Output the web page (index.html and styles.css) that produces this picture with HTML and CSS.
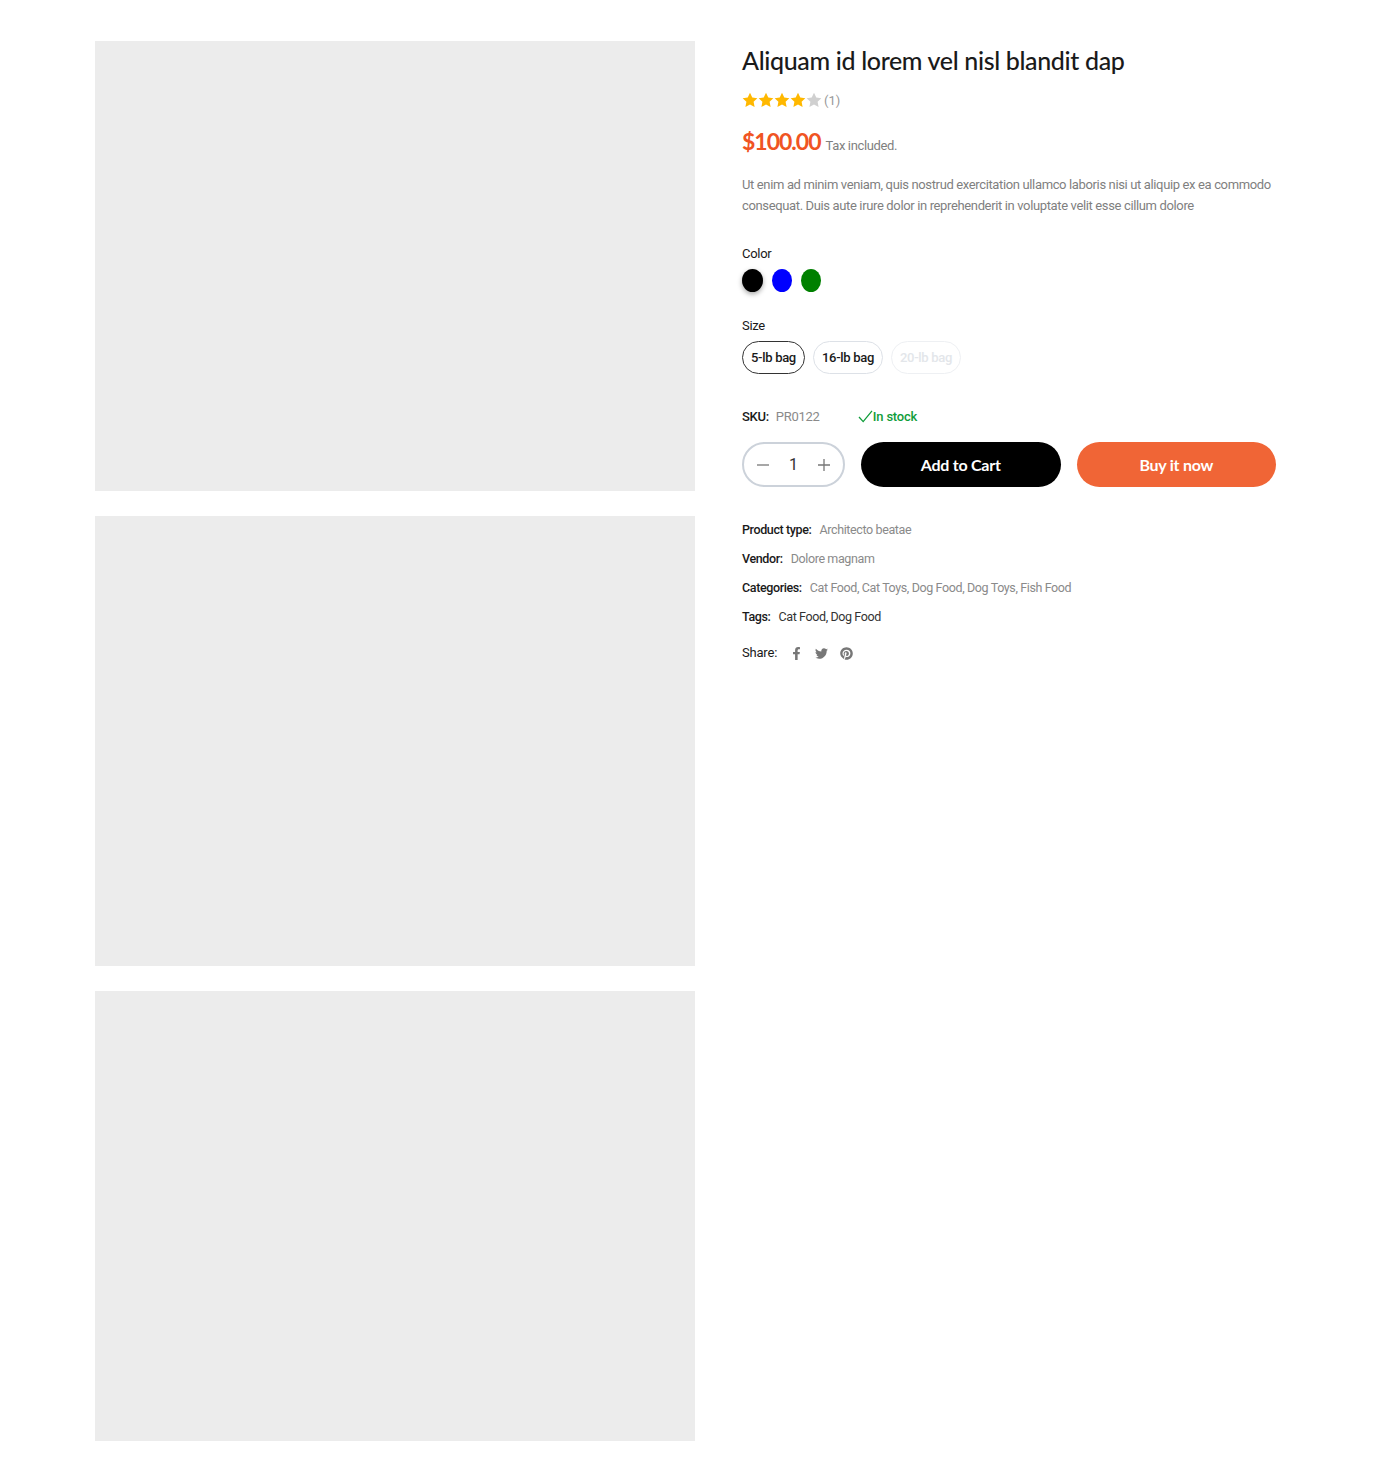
FILE: index.html
```html
<!DOCTYPE html>
<html lang="en">
<head>
    <meta charset="UTF-8">
    <meta name="viewport" content="width=device-width, initial-scale=1.0">
    <title>Product</title>
    <link rel="stylesheet" href="styles.css">
</head>
<body>
    <div class="product">
        <div class="gallery">
            <div class="photo"></div>
            <div class="photo"></div>
            <div class="photo"></div>
        </div>
        <div class="info">
            <h1 class="title">Aliquam id lorem vel nisl blandit dap</h1>
            <div class="rating">
                <svg class="star" viewBox="0 0 24 24"><path d="M12 1l3.4 7.2 7.6 1-5.6 5.4 1.5 7.9L12 18.6l-6.9 3.9 1.5-7.9L1 9.200l7.600-1z"/></svg>
                <svg class="star" viewBox="0 0 24 24"><path d="M12 1l3.4 7.2 7.6 1-5.6 5.4 1.5 7.9L12 18.6l-6.9 3.9 1.5-7.9L1 9.200l7.600-1z"/></svg>
                <svg class="star" viewBox="0 0 24 24"><path d="M12 1l3.4 7.2 7.6 1-5.6 5.4 1.5 7.9L12 18.6l-6.9 3.9 1.5-7.9L1 9.200l7.600-1z"/></svg>
                <svg class="star" viewBox="0 0 24 24"><path d="M12 1l3.4 7.2 7.6 1-5.6 5.4 1.5 7.9L12 18.6l-6.9 3.9 1.5-7.9L1 9.200l7.600-1z"/></svg>
                <svg class="star star-off" viewBox="0 0 24 24"><path d="M12 1l3.4 7.2 7.6 1-5.6 5.4 1.5 7.9L12 18.6l-6.9 3.9 1.5-7.9L1 9.200l7.600-1z"/></svg>
                <span class="rating-count">(1)</span>
            </div>
            <div class="price-row">
                <span class="price">$100.00</span>
                <span class="tax">Tax included.</span>
            </div>
            <p class="desc">Ut enim ad minim veniam, quis nostrud exercitation ullamco laboris nisi ut aliquip ex ea commodo consequat. Duis aute irure dolor in reprehenderit in voluptate velit esse cillum dolore</p>

            <div class="option-label color-label">Color</div>
            <div class="swatches">
                <span class="swatch swatch-black"></span>
                <span class="swatch swatch-blue"></span>
                <span class="swatch swatch-green"></span>
            </div>

            <div class="option-label size-label">Size</div>
            <div class="sizes">
                <span class="size size-active">5-lb bag</span>
                <span class="size">16-lb bag</span>
                <span class="size size-disabled">20-lb bag</span>
            </div>

            <div class="sku-row">
                <span class="key">SKU:</span>
                <span class="sku">PR0122</span>
                <span class="stock">
                    <svg class="check" viewBox="0 0 16 14"><path d="M1 7.500l4.500 5L15 1"/></svg>In stock
                </span>
            </div>

            <div class="buy-row">
                <div class="qty">
                    <svg class="qty-icon" viewBox="0 0 12 12"><path d="M0 6h12"/></svg>
                    <span class="qty-num">1</span>
                    <svg class="qty-icon" viewBox="0 0 12 12"><path d="M0 6h12M6 0v12"/></svg>
                </div>
                <button class="btn btn-cart">Add to Cart</button>
                <button class="btn btn-buy">Buy it now</button>
            </div>

            <ul class="meta">
                <li><span class="key">Product type:</span><span class="val">Architecto beatae</span></li>
                <li><span class="key">Vendor:</span><span class="val">Dolore magnam</span></li>
                <li><span class="key">Categories:</span><span class="val">Cat Food, Cat Toys, Dog Food, Dog Toys, Fish Food</span></li>
                <li><span class="key">Tags:</span><span class="val val-dark">Cat Food, Dog Food</span></li>
            </ul>

            <div class="share">
                <span class="share-label">Share:</span>
                <svg class="share-icon" viewBox="0 0 320 512"><path d="M279 288l14-93h-89v-60c0-25 12-50 52-50h41V7s-37-7-72-7c-73 0-121 45-121 125v70H23v93h81v224h100V288z"/></svg>
                <svg class="share-icon" viewBox="0 0 512 512"><path d="M459 152c.3 4.500.3 9 .3 13.600 0 139-106 299-299 299-59 0-115-17-161-47 8 1 16 1 25 1 49 0 94-17 130-45-46-1-85-31-98-73 6 1 13 2 20 2 9 0 19-1 28-4-48-10-84-52-84-103v-1c14 8 30 13 47 13-28-19-47-51-47-87 0-20 5-37 14-53 52 63 129 105 216 110-2-8-3-16-3-24 0-58 47-105 105-105 30 0 57 13 77 33 24-5 46-14 67-26-8 25-25 46-46 59 21-2 41-8 60-16-14 21-32 39-52 54z"/></svg>
                <svg class="share-icon" viewBox="0 0 496 512"><path d="M496 256c0 137-111 248-248 248-26 0-50-4-73-11 10-16 25-44 31-65 3-11 15-58 15-58 8 15 31 28 55 28 73 0 125-67 125-150 0-80-65-139-149-139-104 0-160 70-160 146 0 35 19 79 49 93 5 2 7 1 8-3 1-3 5-20 6-27 1-2 0-4-2-6-10-12-18-34-18-55 0-53 40-104 108-104 59 0 100 40 100 97 0 65-32 109-75 109-24 0-41-20-36-43 7-29 20-59 20-80 0-18-10-33-30-33-24 0-43 25-43 58 0 21 7 35 7 35s-24 99-28 117c-5 20-3 48-1 66C52 413 0 341 0 256 0 119 111 8 248 8s248 111 248 248z"/></svg>
            </div>
        </div>
    </div>
</body>
</html>
```

FILE: styles.css
```css
* {
    box-sizing: border-box;
}
body {
    margin: 0;
    font-family: Roboto, "Noto Sans", sans-serif;
    font-size: 14px;
    color: #111;
    background-color: #fff;
}
.product {
    display: flex;
    gap: 47px;
    padding: 41px 104px 19px 95px;
}
.gallery {
    width: 600px;
    flex-shrink: 0;
    display: flex;
    flex-direction: column;
    gap: 25px;
}
.photo {
    height: 450px;
    background-color: #ececec;
}
.info {
    flex: 1;
    min-width: 0;
}
.title {
    margin: 3px 0 0;
    font-family: Lato, sans-serif;
    font-size: 25px;
    line-height: 32px;
    font-weight: 500;
    letter-spacing: -0.35px;
    color: #1a1a1a;
}
.rating {
    display: flex;
    align-items: center;
    margin-top: 15px;
    height: 18px;
}
.star {
    width: 16px;
    height: 16px;
    fill: #ffb800;
}
.star-off {
    fill: #d0d0d0;
}
.rating-count {
    margin-left: 2px;
    color: #999;
    font-size: 13px;
}
.price-row {
    display: flex;
    align-items: baseline;
    gap: 5px;
    margin-top: 16px;
}
.price {
    font-family: Lato, sans-serif;
    font-size: 23px;
    line-height: 32px;
    font-weight: 700;
    letter-spacing: -1px;
    color: #f05423;
}
.tax {
    font-size: 13px;
    letter-spacing: -0.36px;
    color: #7f7f7f;
}
.desc {
    margin: 17px 0 0;
    font-size: 13px;
    line-height: 21px;
    letter-spacing: -0.36px;
    color: #7f7f7f;
}
.option-label {
    font-size: 13px;
    line-height: 18px;
    letter-spacing: -0.3px;
    color: #1a1a1a;
}
.color-label {
    margin-top: 29px;
}
.swatches {
    display: flex;
    gap: 9px;
    margin-top: 6px;
}
.swatch {
    width: 21px;
    height: 23px;
    border-radius: 50%;
}
.swatch-black {
    background-color: #000;
    box-shadow: 0 2px 5px rgba(0, 0, 0, 0.35);
}
.swatch-blue {
    width: 20px;
    background-color: #0000ff;
}
.swatch-green {
    width: 20px;
    background-color: #008000;
}
.size-label {
    margin-top: 25px;
}
.sizes {
    display: flex;
    gap: 8px;
    margin-top: 6px;
}
.size {
    height: 33px;
    padding: 0 8px;
    display: flex;
    align-items: center;
    border: 1.5px solid #dde1e7;
    border-radius: 17px;
    font-size: 13px;
    font-weight: 500;
    letter-spacing: -0.3px;
    color: #1a1a1a;
}
.size-active {
    border-color: #333;
}
.size-disabled {
    border-color: #eef0f3;
    color: #e3e6ea;
}
.sku-row {
    display: flex;
    align-items: center;
    margin-top: 32px;
    height: 20px;
    font-size: 13px;
    letter-spacing: -0.3px;
}
.key {
    font-weight: 500;
    color: #1a1a1a;
}
.sku {
    margin-left: 7px;
    color: #8a8a8a;
    width: 82px;
}
.stock {
    display: flex;
    align-items: center;
    font-size: 13px;
    letter-spacing: -0.2px;
    color: #0f9d3a;
    font-weight: 500;
}
.check {
    width: 15px;
    height: 13px;
    fill: none;
    stroke: #0f9d3a;
    stroke-width: 1.4;
}
.buy-row {
    display: flex;
    gap: 16px;
    margin-top: 16px;
}
.qty {
    width: 103px;
    height: 45px;
    flex-shrink: 0;
    display: flex;
    align-items: center;
    justify-content: space-between;
    padding: 0 13px;
    border: 2px solid #ccd2da;
    border-radius: 23px;
}
.qty-icon {
    width: 12px;
    height: 12px;
    fill: none;
    stroke: #777;
    stroke-width: 1.3;
}
.qty-num {
    font-size: 16px;
    color: #333;
}
.btn {
    flex: 1;
    height: 45px;
    padding-bottom: 2px;
    border: none;
    border-radius: 23px;
    font-family: Lato, sans-serif;
    font-size: 16px;
    font-weight: 700;
    letter-spacing: -0.25px;
    color: #fff;
    cursor: pointer;
}
.btn-cart {
    background-color: #000;
}
.btn-buy {
    background-color: #f06536;
}
.meta {
    list-style: none;
    margin: 32px 0 0;
    padding: 0;
}
.meta li {
    display: flex;
    gap: 8px;
    height: 29px;
    line-height: 22px;
    font-size: 12.5px;
    letter-spacing: -0.38px;
}
.val {
    color: #8a8a8a;
}
.val-dark {
    color: #333;
}
.share {
    display: flex;
    align-items: center;
    margin-top: 6px;
    height: 22px;
}
.share-label {
    font-size: 13px;
    letter-spacing: -0.2px;
    color: #1a1a1a;
    margin-right: 13px;
}
.share-icon {
    width: 13px;
    height: 13px;
    margin-right: 12px;
    fill: #777;
    margin-top: 2px;
}
```
